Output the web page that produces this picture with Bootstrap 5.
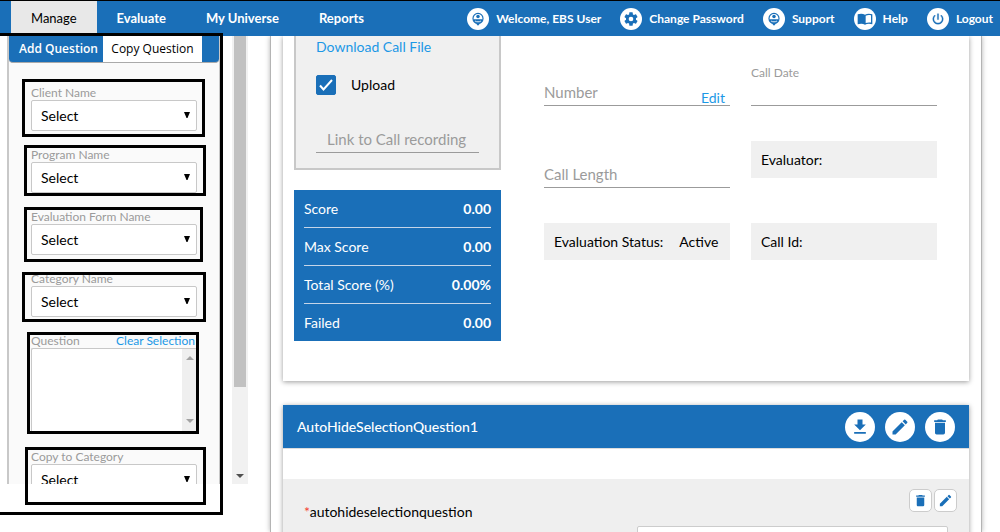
<!DOCTYPE html>
<html lang="en">
<head>
<meta charset="utf-8">
<meta name="viewport" content="width=device-width, initial-scale=1">
<title>Manage - Copy Question</title>
<link rel="stylesheet" href="https://cdn.jsdelivr.net/npm/bootstrap@5.3.0/dist/css/bootstrap.min.css">
<style>
  :root { --brand: #1a6fb8; --sky: #1c98e6; --muted: #9b9b9b; --edge: #c8c8c8; --soft: #f0f0f0; }
  body { font: 14px/20px Lato, "Liberation Sans", sans-serif; color: #000; background: #fff; }
  a { text-decoration: none; }
  svg { display: block; fill: currentColor; }

  /* top bar */
  .topbar { height: 36px; background: var(--brand); border-top: 1px solid #000; }
  .topbar a { color: #fff; font-weight: 700; white-space: nowrap; }
  .menu { padding-left: 11px; font-size: 13px; }
  .menu a { padding: 7px 20px 8px; height: 35px; }
  .menu a.current { color: #000; background: #e8e8e8; font-weight: 400; }
  .tools { gap: 19px; font-size: 12px; padding-right: 7px; }
  .tools a { gap: 7px; }
  .disc { width: 22px; height: 22px; border-radius: 50%; background: #fff; color: var(--brand); }

  /* side panel */
  .side { width: 248px; padding: 0 0 48px 7px; }
  .panel { width: 213px; background: #fafafa; border: solid var(--edge); border-width: 0 1px 0 2px; }
  .tabs { height: 27px; background: var(--brand); border-radius: 0 0 4px 4px; border-bottom: 1px solid #aaa; font: 12px/26px "Open Sans", "Noto Sans", sans-serif; }
  .tabs button { border: 0; background: none; color: #fff; padding: 0 0 0 5px; font-weight: 600; width: 94px; }
  .tabs button.current { background: #fff; color: #000; font-weight: 400; padding: 0; width: 99px; }
  .fields { padding: 23px 22px 0; gap: 17px; }
  .fields label, .fields .clear { display: block; font-size: 12px; line-height: 14px; color: var(--muted); }
  .fields .clear { color: var(--sky); padding-right: 2px; }
  .pick { height: 31px; width: 166px; padding: 0 9px; font-size: 14px; line-height: 20px; color: #000; border: 1px solid var(--edge); border-radius: 2px; background: #fff url("data:image/svg+xml,%3Csvg xmlns='http://www.w3.org/2000/svg' width='6' height='6'%3E%3Cpath d='M0 0h6L3.500 6h-1z'/%3E%3C/svg%3E") no-repeat right 6px top 11px; background-size: 6px 6px; }
  .listbox { width: 166px; height: 85px; background: #fff; border: 1px solid var(--edge); border-right: 0; border-radius: 2px; }
  .listbox textarea { border: 0; resize: none; background: none; overflow: hidden; min-width: 0; }
  .listbar { width: 16px; background: #efefef; color: #a3a3a3; padding: 7px 0 9px; }
  .scroller { width: 16px; background: #f1f1f1; color: #505050; padding-bottom: 6px; }
  .scroller i { width: 12px; height: 351px; background: #c1c1c1; }
  .marks { left: 0; top: 0; width: 248px; height: 532px; fill: none; stroke: #000; stroke-width: 3; pointer-events: none; z-index: 5; }

  /* work area */
  .work { margin: 0 18px 0 22px; padding: 0 12px; border: solid #b4b4b4; border-width: 0 1px; box-shadow: 0 0 5px rgba(0,0,0,.3); }
  .sheet { background: #fff; box-shadow: 0 1px 5px rgba(0,0,0,.4); }
  .call { height: 345px; padding: 0 32px 0 11px; gap: 43px; margin-bottom: 24px; }
  .left { width: 207px; }
  .upload { background: var(--soft); border: 2px solid var(--edge); border-top: 0; padding: 1px 20px 15px; margin-bottom: 20px; }
  .upload a, .edit { color: var(--sky); }
  .tickrow { margin-top: 18px; }
  .upload .form-check-input { width: 20px; height: 20px; margin: 0 15px 0 0; border-radius: 2px; }
  .upload .form-check-input:checked { background: var(--brand) url("data:image/svg+xml,%3Csvg xmlns='http://www.w3.org/2000/svg' viewBox='0 0 20 20'%3E%3Cpath d='M4 10.500l3.500 4L16 5' fill='none' stroke='%23fff' stroke-width='2'/%3E%3C/svg%3E") center / 20px 20px no-repeat; border-color: var(--brand); }
  .line { display: block; width: 100%; border: 0; border-bottom: 1px solid var(--muted); background: none; border-radius: 0; padding: 0 0 1px; height: 26px; font-size: 15px; line-height: 20px; color: #000; }
  .line::placeholder { color: var(--muted); opacity: 1; }
  .upload .line { padding-left: 11px; margin-top: 32px; }
  .score { background: var(--brand); color: #fff; padding: 0 10px; margin: 0; }
  .score div { height: 38px; padding-top: 9px; border-bottom: 1px solid #c5d5e8; }
  .score div:last-child { border: 0; height: 37px; }
  .score dt { font-weight: 400; }
  .facts { display: grid; grid-template-columns: 1fr 1fr; column-gap: 21px; grid-auto-rows: 82px; padding-top: 24px; }
  .cell { height: 46px; }
  .cell label { font-size: 12px; line-height: 14px; color: var(--muted); padding-top: 6px; }
  .plate { background: var(--soft); height: 37px; padding: 9px 10px; margin-top: -1px; gap: 16px; align-self: start; }
  .tall { padding-top: 20px; }
  .edit { right: 5px; bottom: -2px; }

  .head { height: 44px; padding: 0 14px; background: var(--brand); color: #fff; border-bottom: 1px solid #ddd; font-weight: 500; }
  .headtools { gap: 10px; }
  .head button { width: 30px; height: 30px; border: 0; border-radius: 50%; background: #fff; color: var(--brand); padding: 0; }
  .ask { margin-top: 30px; background: #efefef; padding: 10px 12px 40px 21px; }
  .ask label { padding-top: 13px; }
  .star { color: #f44336; }
  .asktools { gap: 2px; }
  .ask button { width: 23px; height: 23px; border: 1px solid #ccc; border-radius: 5px; background: #fff; color: var(--brand); padding: 0; }
  .ask .answer { width: 311px; height: 36px; margin: 4px 9px 0 auto; border: 1px solid #ccc; border-radius: 2px; background: #fff; display: block; }
</style>
</head>
<body class="vh-100 overflow-hidden d-flex flex-column">
<svg class="d-none">
  <symbol id="pin" viewBox="0 0 24 24"><circle cx="12" cy="11" r="8.600" fill="none" stroke="currentColor" stroke-width="2"/><circle cx="12" cy="7.800" r="3"/><path d="M4 12.500h16c-.6 3.500-3.500 7-8 7s-7.400-3.500-8-7z M8.500 19.500h7L12 23.500z"/><path d="M7 15.500c2.500 1.800 7.500 1.800 10 0" fill="none" stroke="#fff" stroke-width="1.500"/></symbol>
  <symbol id="gear" viewBox="0 0 24 24"><path d="M19.430 12.980c.04-.32.07-.64.07-.98s-.03-.66-.07-.98l2.110-1.650c.19-.15.24-.42.12-.64l-2-3.460c-.12-.22-.39-.3-.61-.22l-2.490 1c-.52-.4-1.080-.73-1.690-.98l-.38-2.650A.49.49 0 0 0 14 2h-4c-.25 0-.46.18-.49.42l-.38 2.650c-.61.25-1.170.59-1.690.98l-2.490-1c-.23-.09-.49 0-.61.22l-2 3.460c-.13.22-.07.49.12.64l2.110 1.650c-.04.32-.07.65-.07.98s.03.66.07.98l-2.110 1.650c-.19.15-.24.42-.12.64l2 3.460c.12.22.39.3.61.22l2.490-1c.52.4 1.080.73 1.690.98l.38 2.650c.03.24.24.42.49.42h4c.25 0 .46-.18.49-.42l.38-2.650c.61-.25 1.170-.59 1.690-.98l2.490 1c.23.09.49 0 .61-.22l2-3.460c.12-.22.07-.49-.12-.64zM12 15.500a3.500 3.500 0 1 1 0-7 3.500 3.500 0 0 1 0 7z"/></symbol>
  <symbol id="book" viewBox="0 0 24 24"><path fill-rule="evenodd" d="M1 5c3.500-1.200 8-1.200 11 .5C15 3.800 19.500 3.800 23 5v15c-3.500-1.200-8-1.200-11 .5-3-1.700-7.500-1.700-11-.5zm12 2v11c2.500-1 5.500-1.200 8-.6V6.400c-2.700-.6-5.800-.4-8 .6z"/></symbol>
  <symbol id="power" viewBox="0 0 24 24"><path d="M13 3h-2v10h2zm4.830 2.170l-1.420 1.420A7 7 0 1 1 7.580 6.580L6.170 5.170a9 9 0 1 0 11.660 0z" stroke="currentColor" stroke-width=".6"/></symbol>
  <symbol id="down" viewBox="0 0 24 24"><path d="M19 9h-4V3H9v6H5l7 7zM5 18v2h14v-2z"/></symbol>
  <symbol id="pen" viewBox="0 0 24 24"><path d="M3 17.250V21h3.750L17.810 9.940l-3.750-3.750zM20.710 7.040a1 1 0 0 0 0-1.410l-2.340-2.340a1 1 0 0 0-1.410 0l-1.830 1.830 3.750 3.750z"/></symbol>
  <symbol id="bin" viewBox="0 0 24 24"><path d="M6 19c0 1.100.9 2 2 2h8a2 2 0 0 0 2-2V7H6zM19 4h-3.500l-1-1h-5l-1 1H5v2h14z"/></symbol>
</svg>

<nav class="topbar flex-shrink-0 d-flex justify-content-between">
  <div class="menu d-flex">
    <a class="current" href="#">Manage</a><a href="#">Evaluate</a><a href="#">My Universe</a><a href="#">Reports</a>
  </div>
  <div class="tools d-flex align-items-center">
    <a class="d-flex align-items-center" href="#"><span class="disc d-grid"><svg class="m-auto" width="14" height="14"><use href="#pin"/></svg></span>Welcome, EBS User</a>
    <a class="d-flex align-items-center" href="#"><span class="disc d-grid"><svg class="m-auto" width="16" height="16"><use href="#gear"/></svg></span>Change Password</a>
    <a class="d-flex align-items-center" href="#"><span class="disc d-grid"><svg class="m-auto" width="14" height="14"><use href="#pin"/></svg></span>Support</a>
    <a class="d-flex align-items-center" href="#"><span class="disc d-grid"><svg class="m-auto" width="16" height="16"><use href="#book"/></svg></span>Help</a>
    <a class="d-flex align-items-center" href="#"><span class="disc d-grid"><svg class="m-auto" width="14" height="14"><use href="#power"/></svg></span>Logout</a>
  </div>
</nav>

<div class="d-flex flex-grow-1 overflow-hidden">
  <aside class="side flex-shrink-0 d-flex justify-content-between overflow-hidden">
    <div class="panel overflow-hidden">
      <div class="tabs d-flex"><button type="button">Add Question</button><button type="button" class="current">Copy Question</button></div>
      <form class="fields d-flex flex-column">
        <div><label for="client">Client Name</label><select class="pick form-select" id="client"><option>Select</option></select></div>
        <div><label for="program">Program Name</label><select class="pick form-select" id="program"><option>Select</option></select></div>
        <div><label for="evalform">Evaluation Form Name</label><select class="pick form-select" id="evalform"><option>Select</option></select></div>
        <div><label for="category">Category Name</label><select class="pick form-select" id="category"><option>Select</option></select></div>
        <div>
          <div class="d-flex justify-content-between"><label for="question">Question</label><a class="clear" href="#">Clear Selection</a></div>
          <div class="listbox d-flex">
            <textarea class="flex-grow-1" id="question"></textarea>
            <div class="listbar d-flex flex-column justify-content-between align-items-center">
              <svg width="8" height="4"><path d="M0 4 4 0l4 4z"/></svg><svg width="8" height="4"><path d="M0 0h8L4 4z"/></svg>
            </div>
          </div>
        </div>
        <div><label for="copyto">Copy to Category</label><select class="pick form-select" id="copyto"><option>Select</option></select></div>
      </form>
    </div>
    <div class="scroller d-flex flex-column justify-content-between align-items-center"><i></i><svg width="8" height="4"><path d="M0 0h8L4 4z"/></svg></div>
  </aside>

  <main class="work flex-grow-1">
    <section class="sheet call d-flex">
      <div class="left flex-shrink-0">
        <div class="upload">
          <a href="#">Download Call File</a>
          <div class="tickrow d-flex align-items-center"><input class="form-check-input" type="checkbox" id="upload" checked><label for="upload">Upload</label></div>
          <input class="line" type="text" placeholder="Link to Call recording" aria-label="Link to Call recording">
        </div>
        <dl class="score">
          <div class="d-flex justify-content-between"><dt>Score</dt><dd class="fw-bold m-0">0.00</dd></div>
          <div class="d-flex justify-content-between"><dt>Max Score</dt><dd class="fw-bold m-0">0.00</dd></div>
          <div class="d-flex justify-content-between"><dt>Total Score (%)</dt><dd class="fw-bold m-0">0.00%</dd></div>
          <div class="d-flex justify-content-between"><dt>Failed</dt><dd class="fw-bold m-0">0.00</dd></div>
        </dl>
      </div>
      <div class="facts flex-grow-1 align-content-start">
        <div class="cell tall position-relative"><input class="line" type="text" placeholder="Number" aria-label="Number"><a class="edit position-absolute" href="#">Edit</a></div>
        <div class="cell"><label class="d-block" for="date">Call Date</label><input class="line" type="text" id="date"></div>
        <div class="cell tall"><input class="line" type="text" placeholder="Call Length" aria-label="Call Length"></div>
        <div class="plate">Evaluator:</div>
        <div class="plate d-flex"><span>Evaluation Status:</span><span>Active</span></div>
        <div class="plate">Call Id:</div>
      </div>
    </section>

    <section class="sheet">
      <div class="head d-flex align-items-center">
        <span class="flex-grow-1">AutoHideSelectionQuestion1</span>
        <div class="headtools d-flex">
          <button type="button" class="d-grid" aria-label="Download"><svg class="m-auto" width="20" height="20"><use href="#down"/></svg></button>
          <button type="button" class="d-grid" aria-label="Edit"><svg class="m-auto" width="20" height="20"><use href="#pen"/></svg></button>
          <button type="button" class="d-grid" aria-label="Delete"><svg class="m-auto" width="20" height="20"><use href="#bin"/></svg></button>
        </div>
      </div>
      <div class="ask">
        <div class="d-flex justify-content-between">
          <label for="answer"><span class="star">*</span>autohideselectionquestion</label>
          <div class="asktools d-flex">
            <button type="button" class="d-grid" aria-label="Delete question"><svg class="m-auto" width="15" height="15"><use href="#bin"/></svg></button>
            <button type="button" class="d-grid" aria-label="Edit question"><svg class="m-auto" width="15" height="15"><use href="#pen"/></svg></button>
          </div>
        </div>
        <input class="answer" type="text" id="answer">
      </div>
    </section>
  </main>
</div>

<!-- review outlines drawn over the side panel -->
<svg class="marks position-absolute" aria-hidden="true">
  <path d="M0 34.500H221.500V513.500H0"/>
  <path d="M23.500 80.500h180v55h-180zM25.500 146.500h179v48h-179zM25.500 208.500h176v52h-176zM23.500 273.500h181v47h-181zM28.500 333.500h169v99h-169zM26.500 448.500h178v55h-178z"/>
</svg>
<script src="https://cdn.jsdelivr.net/npm/bootstrap@5.3.0/dist/js/bootstrap.bundle.min.js"></script>
</body>
</html>
